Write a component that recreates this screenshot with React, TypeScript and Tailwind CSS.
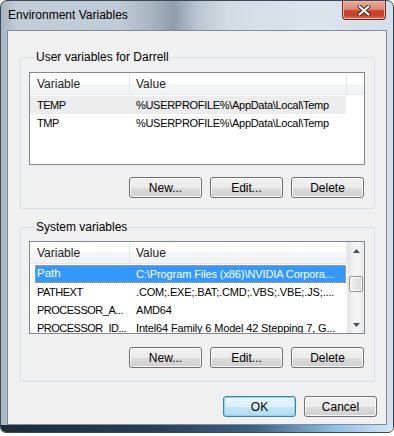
import React from "react";

interface Row {
  name: string;
  value: string;
  valueClass: string;
}

const userVars: Row[] = [
  { name: "TEMP", value: "%USERPROFILE%\\AppData\\Local\\Temp", valueClass: "tracking-[-0.3px]" },
  { name: "TMP", value: "%USERPROFILE%\\AppData\\Local\\Temp", valueClass: "tracking-[-0.3px]" },
];

const systemVars: Row[] = [
  { name: "Path", value: "C:\\Program Files (x86)\\NVIDIA Corpora...", valueClass: "tracking-[-0.1px]" },
  { name: "PATHEXT", value: ".COM;.EXE;.BAT;.CMD;.VBS;.VBE;.JS;....", valueClass: "tracking-[-0.15px]" },
  { name: "PROCESSOR_A...", value: "AMD64", valueClass: "tracking-[-0.2px]" },
  { name: "PROCESSOR_ID...", value: "Intel64 Family 6 Model 42 Stepping 7, G...", valueClass: "tracking-[-0.15px]" },
];

function WinButton({ label, primary }: { label: string; primary?: boolean }) {
  return (
    <button
      className={
        primary
          ? "w-[73px] h-[21px] rounded-[3px] border border-[#3c7fb1] bg-[linear-gradient(#eaf6fd_0%,#dcf0fb_50%,#c4e5f6_50%,#b3dbf0_100%)] shadow-[inset_0_0_0_1px_#8fd3f3] flex items-center justify-center text-[12px] leading-none text-black"
          : "w-[73px] h-[21px] rounded-[3px] border border-[#707070] bg-[linear-gradient(#f2f2f2_0%,#ebebeb_50%,#dddddd_50%,#cfcfcf_100%)] shadow-[inset_0_0_0_1px_#fbfbfb] flex items-center justify-center text-[12px] leading-none text-black"
      }
    >
      {label}
    </button>
  );
}

function Header({ full }: { full?: boolean }) {
  return (
    <div className="h-[22px] flex shrink-0 border-b border-[#e3e6ea] bg-[linear-gradient(#ffffff_0%,#ffffff_50%,#f5f6f7_50%,#f1f2f4_100%)] text-[#1e1e1e]">
      <div className="w-[100px] pl-[7px] flex items-center border-r border-[#e3e6ea]">Variable</div>
      <div className="w-[217px] pl-[6px] flex items-center border-r border-[#e3e6ea]">Value</div>
      {full && <div className="flex-1" />}
    </div>
  );
}

function ScrollBar() {
  return (
    <div className="w-[17px] h-full flex flex-col items-center border-l border-[#e9e9e9] bg-[linear-gradient(90deg,#e4e4e4,#f4f4f4_40%,#f4f4f4_70%,#e8e8e8)]">
      <div className="h-[17px] w-full flex items-center justify-center">
        <svg width="7" height="4" viewBox="0 0 7 4">
          <path d="M3.5 0 L7 4 L0 4 Z" fill="#4d4d4d" />
        </svg>
      </div>
      <div className="flex-1 w-full flex flex-col">
        <div className="h-[17px]" />
        <div className="h-[16px] mx-[1px] rounded-[2px] border border-[#979797] bg-[linear-gradient(90deg,#f4f4f4,#e6e6e6_50%,#d8d8d8)] shadow-[inset_0_0_0_1px_#fafafa]" />
      </div>
      <div className="h-[17px] w-full flex items-center justify-center">
        <svg width="7" height="4" viewBox="0 0 7 4">
          <path d="M0 0 L7 0 L3.5 4 Z" fill="#4d4d4d" />
        </svg>
      </div>
    </div>
  );
}

export default function App() {
  return (
    <div className="w-[394px] h-[436px] overflow-hidden bg-white font-['Liberation_Sans',Arial,sans-serif] text-[12px] text-black">
      <div className="w-full h-[433px] rounded-t-[7px] rounded-b-[6px] border border-[#3b4857] bg-[linear-gradient(90deg,#a6b4c1_0%,#c2cdd8_4%,#bfcbd6_30%,#aab7c3_38%,#8f9dab_44%,#b9c5d0_50%,#d3dce4_58%,#dce4eb_80%,#d3dfea_100%)] flex flex-col">
        {/* Title bar */}
        <div className="h-[29px] shrink-0 flex items-start justify-between">
          <span className="pl-[7px] pt-[7px] leading-[15px] text-black">Environment Variables</span>
          <button className="mr-[7px] w-[44px] h-[19px] rounded-b-[4px] border border-t-0 border-[#6b2418] bg-[linear-gradient(#eaa99a_0%,#de8b78_45%,#c7432e_55%,#c8432c_80%,#df6d50_100%)] shadow-[inset_0_0_0_1px_#f1b9a9] flex items-center justify-center">
            <svg width="14" height="11" viewBox="0 0 14 11">
              <path d="M2.5 1.5 L11.5 9.5 M11.5 1.5 L2.5 9.5" stroke="#4a1a12" strokeWidth="4" strokeLinecap="round" />
              <path d="M2.5 1.5 L11.5 9.5 M11.5 1.5 L2.5 9.5" stroke="#ffffff" strokeWidth="2.2" strokeLinecap="round" />
            </svg>
          </button>
        </div>

        {/* Client area */}
        <div className="mx-[6px] h-[395px] shrink-0 border border-[#7f8c99] bg-[#f0f0f0] flex flex-col pl-[12px] pr-[11px]">
          {/* User variables */}
          <fieldset className="mt-[18px] w-[355px] border border-[#d5dfe5] rounded-[3px] pl-[8px] pr-[9px] pb-[10px]">
            <legend className="ml-[6px] px-[1px] leading-[16px]">User variables for Darrell</legend>
            <div className="mt-[7px] w-[336px] h-[93px] border border-[#828790] bg-white flex flex-col overflow-hidden">
              <Header full />
              <div className="mt-[1px] flex flex-col">
                {userVars.map((r, i) => (
                  <div key={r.name} className={`h-[18px] w-[316px] flex items-center ${i === 0 ? "bg-[#ececec]" : ""}`}>
                    <div className="w-[99px] pl-[7px] whitespace-nowrap text-[11px] tracking-[-0.5px]">{r.name}</div>
                    <div className={`pl-[7px] whitespace-nowrap text-[11px] ${r.valueClass}`}>{r.value}</div>
                  </div>
                ))}
              </div>
            </div>
            <div className="mt-[12px] flex justify-end gap-[8px] mr-[1px]">
              <WinButton label="New..." />
              <WinButton label="Edit..." />
              <WinButton label="Delete" />
            </div>
          </fieldset>

          {/* System variables */}
          <fieldset className="mt-[10px] w-[355px] border border-[#d5dfe5] rounded-[3px] pl-[8px] pr-[9px] pb-[13px]">
            <legend className="ml-[6px] px-[1px] leading-[16px]">System variables</legend>
            <div className="mt-[6px] w-[336px] h-[93px] border border-[#828790] bg-white flex overflow-hidden">
              <div className="w-[317px] flex flex-col">
                <Header />
                <div className="mt-[1px] flex flex-col">
                  {systemVars.map((r, i) =>
                    i === 0 ? (
                      <div key={r.name} className="h-[18px] flex items-center">
                        <div className="ml-[5px] h-full w-[311px] flex items-center bg-[#3399ff] text-white outline-1 outline-dotted outline-[#ff9a3c] -outline-offset-1">
                          <div className="w-[94px] pl-[2px] whitespace-nowrap text-[11.5px]">{r.name}</div>
                          <div className={`pl-[7px] whitespace-nowrap text-[11px] ${r.valueClass}`}>{r.value}</div>
                        </div>
                      </div>
                    ) : (
                      <div key={r.name} className="h-[18px] flex items-center">
                        <div className="w-[99px] pl-[7px] whitespace-nowrap text-[11px] tracking-[-0.5px]">{r.name}</div>
                        <div className={`pl-[7px] whitespace-nowrap text-[11px] ${r.valueClass}`}>{r.value}</div>
                      </div>
                    )
                  )}
                </div>
              </div>
              <ScrollBar />
            </div>
            <div className="mt-[13px] flex justify-end gap-[8px] mr-[1px]">
              <WinButton label="New..." />
              <WinButton label="Edit..." />
              <WinButton label="Delete" />
            </div>
          </fieldset>

          <div className="mt-[14px] flex justify-end gap-[8px] mr-[-2px]">
            <WinButton label="OK" primary />
            <WinButton label="Cancel" />
          </div>
        </div>

        {/* Bottom frame */}
        <div className="flex-1 rounded-b-[5px] bg-[linear-gradient(90deg,#1d2b3a_0%,#2c3f53_40%,#3d6386_65%,#8fbde3_85%,#d4e6f4_100%)]" />
      </div>
    </div>
  );
}
